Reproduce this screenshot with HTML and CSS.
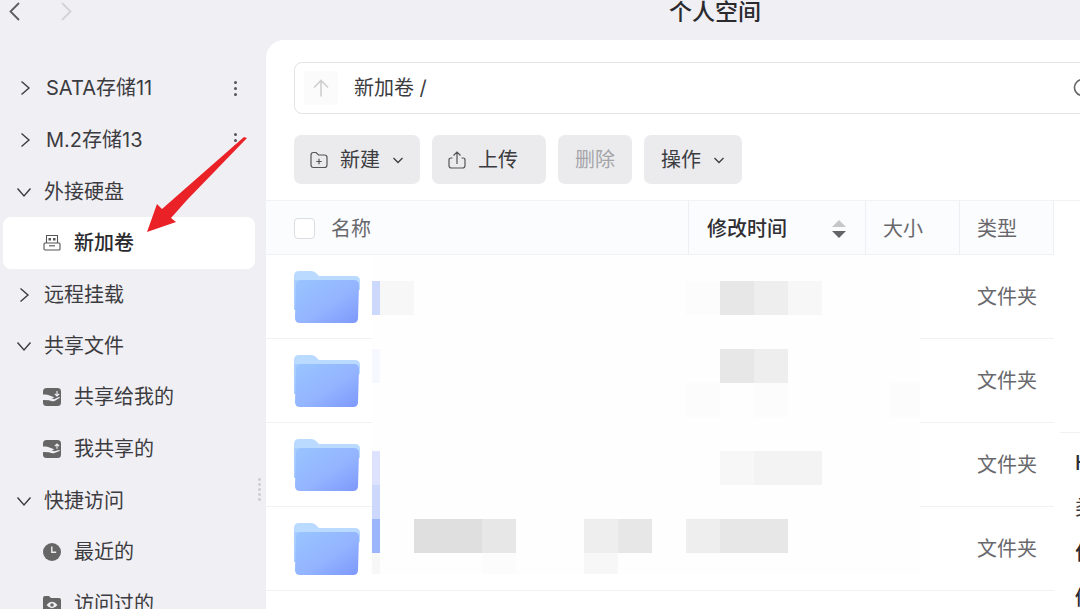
FILE: index.html
```html
<!DOCTYPE html>
<html lang="zh-CN">
<head>
    <meta charset="UTF-8">
    <meta name="viewport" content="width=device-width, initial-scale=1.0">
    <title>个人空间</title>
    <link rel="stylesheet" href="styles.css">
</head>
<body>
    <!-- shared icons -->
    <svg class="defs" width="0" height="0">
        <defs>
            <linearGradient id="folder-front" x1="0" y1="0" x2="1" y2="1">
                <stop offset="0" stop-color="#98c5ff"/>
                <stop offset="0.55" stop-color="#94b4ff"/>
                <stop offset="1" stop-color="#7d98fb"/>
            </linearGradient>
            <symbol id="chevron" viewBox="0 0 16 16">
                <path d="M4.5 1.5 L12 8 L4.5 14.5" fill="none" stroke="currentColor" stroke-width="1.4"/>
            </symbol>
            <symbol id="caret" viewBox="0 0 12 12">
                <path d="M1.5 4 L6 8.5 L10.5 4" fill="none" stroke="currentColor" stroke-width="1.3"/>
            </symbol>
            <symbol id="folder" viewBox="0 0 66 54">
                <path d="M0 6 Q0 1 5 1 H17 Q20 1 22 3 L25 6 H61 Q66 6 66 11 V20 H0 Z" fill="#badaff"/>
                <path d="M0 10 H4 V40 H0 Z" fill="#a9ceff"/>
                <path d="M2 15 Q2 10 7 10 H60 Q65 10 65 15 L64 48 Q64 53 59 53 H6 Q1 53 1 48 Z" fill="url(#folder-front)"/>
            </symbol>
        </defs>
    </svg>

    <div class="app">
        <header class="topbar">
            <nav class="history">
                <button class="history-btn" aria-label="后退">
                    <svg width="20" height="22" viewBox="0 0 20 22"><path d="M14 3 L5.5 11.5 L14 20" fill="none" stroke="#5b5b60" stroke-width="1.8"/></svg>
                </button>
                <button class="history-btn" aria-label="前进" disabled>
                    <svg width="20" height="22" viewBox="0 0 20 22"><path d="M7 3 L15.5 11.5 L7 20" fill="none" stroke="#d3d3d7" stroke-width="1.8"/></svg>
                </button>
            </nav>
            <h1 class="title">个人空间</h1>
        </header>

        <aside class="sidebar">
            <a class="group drive" href="#">
                <svg class="arrow"><use href="#chevron"/></svg>SATA存储11
                <span class="more"><i></i><i></i><i></i></span>
            </a>
            <a class="group drive" href="#">
                <svg class="arrow"><use href="#chevron"/></svg>M.2存储13
                <span class="more"><i></i><i></i><i></i></span>
            </a>
            <a class="group" href="#"><svg class="arrow open"><use href="#chevron"/></svg>外接硬盘</a>
            <a class="item active" href="#">
                <svg class="icon" viewBox="0 0 18 18">
                    <g fill="none" stroke="#555" stroke-width="1.1">
                        <path d="M3.5 9 V1.5 H14.5 V9"/>
                        <rect x="1" y="9" width="16" height="7" rx="1"/>
                        <path d="M6 11.8 H12"/>
                    </g>
                    <path d="M5.5 4 H8 V6.4 H5.5 Z M10 4 H12.5 V6.4 H10 Z" fill="#555"/>
                </svg>新加卷
            </a>
            <a class="group" href="#"><svg class="arrow"><use href="#chevron"/></svg>远程挂载</a>
            <a class="group" href="#"><svg class="arrow open"><use href="#chevron"/></svg>共享文件</a>
            <a class="item" href="#">
                <svg class="icon" viewBox="0 0 18 18">
                    <rect width="18" height="18" rx="3.5" fill="#666"/>
                    <path d="M0 6.5 Q4 6 6.5 7.6 L10.5 9 Q11.5 9.8 10 10.2 L8 10.2 L11 11.2 L16 9 Q17.5 8.8 16.5 10 L11.5 13 Q9.5 13.8 6 12.2 L0 12 Z" fill="#f0eff4"/>
                    <path d="M14 3 V7.8 M11.8 5.8 L14 8 L16.2 5.8" fill="none" stroke="#f0eff4" stroke-width="1.1"/>
                </svg>共享给我的
            </a>
            <a class="item" href="#">
                <svg class="icon" viewBox="0 0 18 18">
                    <rect width="18" height="18" rx="3.5" fill="#666"/>
                    <path d="M0 6.5 Q4 6 6.5 7.6 L10.5 9 Q11.5 9.8 10 10.2 L8 10.2 L11 11.2 L16 10 Q17.5 9.8 16.5 11 L11.5 13 Q9.5 13.8 6 12.2 L0 12 Z" fill="#f0eff4"/>
                    <path d="M14 8.8 V4 M11.8 6.2 L14 4 L16.2 6.2" fill="none" stroke="#f0eff4" stroke-width="1.1"/>
                </svg>我共享的
            </a>
            <a class="group" href="#"><svg class="arrow open"><use href="#chevron"/></svg>快捷访问</a>
            <a class="item" href="#">
                <svg class="icon" viewBox="0 0 18 18">
                    <circle cx="9" cy="9" r="9" fill="#666"/>
                    <path d="M8.8 3.5 V9.3 H13.2" fill="none" stroke="#f0eff4" stroke-width="1.4"/>
                </svg>最近的
            </a>
            <a class="item" href="#">
                <svg class="icon" viewBox="0 0 18 18">
                    <path d="M0 3 Q0 1 2 1 H6 L8 3 H16 Q18 3 18 5 V16 Q18 18 16 18 H2 Q0 18 0 16 Z" fill="#666"/>
                    <path d="M3.5 10 Q9 3.5 14.5 10 Q9 16.5 3.5 10 Z" fill="#f0eff4"/>
                    <circle cx="9" cy="10" r="1.8" fill="#666"/>
                </svg>访问过的
            </a>
            <div class="resizer"></div>
        </aside>

        <main class="content">
            <div class="path-bar">
                <button class="up" aria-label="上一级" disabled>
                    <svg width="20" height="20" viewBox="0 0 20 20"><path d="M10 18.5 V2.5 M3 9.5 L10 2.5 L17 9.5" fill="none" stroke="#cfcfcf" stroke-width="1.6"/></svg>
                </button>
                <span class="path">新加卷 /</span>
                <button class="search" aria-label="搜索">
                    <svg width="22" height="22" viewBox="0 0 22 22"><path d="M9.5 2.5 a8 8 0 1 0 0.1 0 M15.5 16.5 L20 21" fill="none" stroke="#666" stroke-width="1.6"/></svg>
                </button>
            </div>

            <div class="toolbar">
                <button class="btn">
                    <svg width="18" height="18" viewBox="0 0 18 18"><path d="M1 4 Q1 1.5 3.5 1.5 H6 L8.5 4 H14.5 Q17 4 17 6.5 V14 Q17 16.5 14.5 16.5 H3.5 Q1 16.5 1 14 Z M9 7.8 V13.2 M6.3 10.5 H11.7" fill="none" stroke="#555" stroke-width="1.2"/></svg>
                    新建
                    <svg class="caret" width="12" height="12"><use href="#caret"/></svg>
                </button>
                <button class="btn upload">
                    <svg width="18" height="18" viewBox="0 0 18 18"><path d="M4.5 7 H3 Q1 7 1 9 V14.5 Q1 17 3.5 17 H14.5 Q17 17 17 14.5 V9 Q17 7 15 7 H13.5 M9 13 V1 M5.5 4.5 L9 1 L12.5 4.5" fill="none" stroke="#555" stroke-width="1.2"/></svg>
                    上传
                </button>
                <button class="btn plain" disabled>删除</button>
                <button class="btn plain">
                    操作
                    <svg class="caret" width="12" height="12"><use href="#caret"/></svg>
                </button>
            </div>

            <div class="files">
                <div class="list">
                    <table>
                        <thead>
                            <tr>
                                <th class="name"><label><input type="checkbox">名称</label></th>
                                <th class="time"><div>修改时间
                                    <svg width="14" height="20" viewBox="0 0 14 20"><path d="M0 8 L7 1 L14 8 Z" fill="#c6c7c9"/><path d="M0 12 L7 19 L14 12 Z" fill="#636467"/></svg>
                                </div></th>
                                <th class="size">大小</th>
                                <th class="type">类型</th>
                            </tr>
                        </thead>
                        <tbody>
                            <tr><td class="name"><svg class="folder"><use href="#folder"/></svg></td><td></td><td></td><td>文件夹</td></tr>
                            <tr><td class="name"><svg class="folder"><use href="#folder"/></svg></td><td></td><td></td><td>文件夹</td></tr>
                            <tr><td class="name"><svg class="folder"><use href="#folder"/></svg></td><td></td><td></td><td>文件夹</td></tr>
                            <tr><td class="name"><svg class="folder"><use href="#folder"/></svg></td><td></td><td></td><td>文件夹</td></tr>
                        </tbody>
                    </table>

                    <!-- pixelated cover over private names and dates -->
                    <div class="mosaic">
                        <i class="r2 c1 blue-2"></i>
                        <i class="r2 c2 gray-2"></i>
                        <i class="r2 c11 gray-1"></i>
                        <i class="r2 c12 gray-5"></i>
                        <i class="r2 c13 gray-4"></i>
                        <i class="r2 c14 gray-2"></i>
                        <i class="r4 c1 blue-0"></i>
                        <i class="r4 c12 gray-5"></i>
                        <i class="r4 c13 gray-4"></i>
                        <i class="r5 c11 gray-1"></i>
                        <i class="r5 c13 gray-1"></i>
                        <i class="r5 c17 gray-1"></i>
                        <i class="r7 c1 blue-1"></i>
                        <i class="r7 c12 gray-2"></i>
                        <i class="r7 c13 gray-3"></i>
                        <i class="r7 c14 gray-3"></i>
                        <i class="r8 c1 blue-2"></i>
                        <i class="r9 c1 blue-3"></i>
                        <i class="r9 c3 wide gray-6"></i>
                        <i class="r9 c5 gray-5"></i>
                        <i class="r9 c8 gray-4"></i>
                        <i class="r9 c9 gray-5"></i>
                        <i class="r9 c11 gray-4"></i>
                        <i class="r9 c12 wide gray-5"></i>
                        <i class="r10 c1 gray-2"></i>
                        <i class="r10 c5 gray-1"></i>
                        <i class="r10 c8 gray-2"></i>
                    </div>
                </div>

                <aside class="detail">
                    <div class="preview"></div>
                    <p class="strong">HDD</p>
                    <p>类型</p>
                    <p class="strong">位置</p>
                    <p class="strong">修改时间</p>
                </aside>
            </div>
        </main>
    </div>

    <svg class="pointer" width="100" height="96" viewBox="0 0 100 96">
        <path d="M0 96 L10 68 L15 73 L97 1 L100 2 L40 64 L24 82 L29 86 Z" fill="#ea2227"/>
    </svg>
</body>
</html>
```
FILE: styles.css
```css
* {
    box-sizing: border-box;
}

body {
    margin: 0;
    height: 100vh;
    overflow: hidden;
    position: relative;
    background-color: #f0eff4;
    color: #3c3c40;
    font-family: Inter, "Noto Sans CJK SC", sans-serif;
    font-size: 20px;
    line-height: 30px;
}

button {
    border: 0;
    padding: 0;
    background: none;
    font: inherit;
    color: inherit;
}

a {
    color: inherit;
    text-decoration: none;
}

.defs {
    position: absolute;
}

/* window is wider than the viewport, right side is cut off */
.app {
    width: calc(100% + 84px);
    height: 100%;
    display: grid;
    grid-template-columns: 266px 1fr;
    grid-template-rows: 40px 1fr;
}

.topbar {
    grid-column: 1 / 3;
    display: grid;
    grid-template-columns: subgrid;
}

.history {
    display: flex;
    align-items: flex-start;
    gap: 30px;
    padding-left: 5px;
}

.history-btn {
    height: 22px;
    display: flex;
}

.title {
    margin: 0;
    text-align: center;
    font-size: 23px;
    font-weight: 500;
    line-height: 24px;
    color: #2b2b2f;
}

/* sidebar */
.sidebar {
    position: relative;
    padding: 22px 11px 0 3px;
}

.group, .item {
    display: flex;
    align-items: center;
    white-space: nowrap;
}

.group {
    height: 51px;
    padding-left: 13px;
    gap: 12px;
}

.drive {
    height: 52px;
    gap: 13px;
    padding-left: 14px;
}

.item {
    height: 52px;
    padding-left: 40px;
    gap: 13px;
    border-radius: 8px;
}

.active {
    background-color: #fff;
    font-weight: 500;
    color: #2b2b2f;
}

.arrow {
    width: 16px;
    height: 16px;
    flex: none;
}

.open {
    transform: rotate(90deg);
}

.icon {
    width: 18px;
    height: 18px;
    flex: none;
}

.more {
    margin-left: auto;
    margin-right: 18px;
    display: flex;
    flex-direction: column;
    gap: 3px;
}

.more i {
    width: 3px;
    height: 3px;
    border-radius: 50%;
    background-color: #55555a;
}

.resizer {
    position: absolute;
    right: 5px;
    top: 437px;
    width: 3px;
    height: 24px;
    background: radial-gradient(circle, #cfcfd4 1px, transparent 2px) 0 0 / 3px 5px;
}

/* content */
.content {
    min-width: 0;
    padding-top: 22px;
    border-top-left-radius: 18px;
    background-color: #fff;
    display: flex;
    flex-direction: column;
}

.path-bar {
    height: 52px;
    margin: 0 50px 0 28px;
    padding: 0 18px 0 9px;
    border: 1px solid #e3e4e6;
    border-radius: 8px;
    display: flex;
    align-items: center;
}

.up {
    width: 34px;
    height: 34px;
    margin-right: 16px;
    border-radius: 4px;
    background-color: #fbfbfb;
    display: flex;
    justify-content: center;
    align-items: center;
}

.search {
    margin-left: auto;
    display: flex;
}

.toolbar {
    display: flex;
    gap: 12px;
    padding: 21px 28px 16px;
    border-bottom: 1px solid #f1f2f3;
}

.btn {
    height: 49px;
    padding: 0 16px;
    border-radius: 7px;
    background-color: #ebebee;
    display: flex;
    align-items: center;
    gap: 12px;
}

.btn:disabled {
    color: #a5a5a8;
}

.upload {
    padding-right: 28px;
}

.plain {
    padding: 0 17px;
}

.files {
    flex: 1;
    display: flex;
}

.list {
    flex: 1;
    position: relative;
}

table {
    width: 100%;
    border-collapse: separate;
    border-spacing: 0;
    table-layout: fixed;
}

th {
    height: 54px;
    padding: 2px 0 0 17px;
    text-align: left;
    font-weight: 400;
    color: #68686c;
    background-color: #fbfcfe;
    border-right: 1px solid #eeeff2;
    border-bottom: 1px solid #f0f1f3;
}

td {
    height: 84px;
    padding: 0 0 0 17px;
    color: #68686c;
    border-bottom: 1px solid #f1f1f3;
}

th.name, td.name {
    padding-left: 28px;
}

th.time {
    width: 177px;
    padding-left: 18px;
    padding-right: 19px;
    font-weight: 500;
    color: #2f2f33;
}

th.time div {
    display: flex;
    justify-content: space-between;
    align-items: center;
}

th.size, th.type {
    width: 94px;
}

th label {
    display: flex;
    align-items: center;
    gap: 16px;
}

input[type="checkbox"] {
    appearance: none;
    width: 21px;
    height: 21px;
    margin: 0;
    border: 1px solid #dcdde0;
    border-radius: 4px;
    background-color: #fff;
}

.folder {
    display: block;
    width: 66px;
    height: 54px;
}

/* mosaic */
.mosaic {
    position: absolute;
    left: 106px;
    top: 56px;
    display: grid;
    grid-template-columns: 8px repeat(15, 34px) 30px;
    grid-template-rows: 24px repeat(8, 34px) 21px;
    background-color: #fefefe;
}

.r2 { grid-row: 2; }
.r4 { grid-row: 4; }
.r5 { grid-row: 5; }
.r7 { grid-row: 7; }
.r8 { grid-row: 8; }
.r9 { grid-row: 9; }
.r10 { grid-row: 10; }

.c1 { grid-column: 1; }
.c2 { grid-column: 2; }
.c3 { grid-column: 3; }
.c5 { grid-column: 5; }
.c8 { grid-column: 8; }
.c9 { grid-column: 9; }
.c11 { grid-column: 11; }
.c12 { grid-column: 12; }
.c13 { grid-column: 13; }
.c14 { grid-column: 14; }
.c17 { grid-column: 17; }
.wide { grid-column-end: span 2; }

.gray-1 { background-color: #fcfcfc; }
.gray-2 { background-color: #f7f7f7; }
.gray-3 { background-color: #f3f3f3; }
.gray-4 { background-color: #eeeeee; }
.gray-5 { background-color: #e7e7e7; }
.gray-6 { background-color: #dfdfdf; }

.blue-0 { background-color: #f7f8ff; }
.blue-1 { background-color: #dde3ff; }
.blue-2 { background-color: #ccd9fd; }
.blue-3 { background-color: #9bb6fb; }

/* detail panel */
.detail {
    width: 110px;
    padding-left: 6px;
    flex: none;
}

.preview {
    height: 232px;
    margin-bottom: 8px;
    border-bottom: 1px solid #f1f1f3;
}

.detail p {
    margin: 0;
    padding-left: 15px;
    line-height: 45px;
    white-space: nowrap;
}

.detail .strong {
    font-weight: 500;
    color: #2b2b2f;
}

/* red arrow pointing at the selected volume */
.pointer {
    position: absolute;
    left: 147px;
    top: 136px;
}
```
